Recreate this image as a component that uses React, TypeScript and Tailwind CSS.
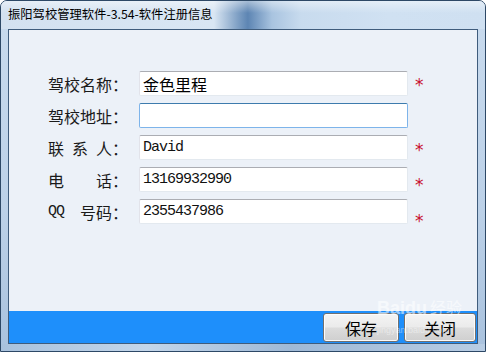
import type { ReactNode } from 'react'

const cjk = { fontFamily: '"Noto Sans CJK SC", "Microsoft YaHei", sans-serif' }
const mono = { fontFamily: '"Liberation Mono", "Noto Sans CJK SC", monospace' }

type Field = {
  label: ReactNode
  value: string
  latin: boolean
  focused?: boolean
  required: boolean
  starOffset: string
}

const fields: Field[] = [
  { label: <span>驾校名称：</span>, value: '金色里程', latin: false, required: true, starOffset: '-translate-y-[2px]' },
  { label: <span>驾校地址：</span>, value: '', latin: false, focused: true, required: false, starOffset: '' },
  {
    label: (
      <>
        <span>联</span>
        <span>系</span>
        <span>人：</span>
      </>
    ),
    value: 'David',
    latin: true,
    required: true,
    starOffset: '-translate-y-[1px]',
  },
  {
    label: (
      <>
        <span>电</span>
        <span>话：</span>
      </>
    ),
    value: '13169932990',
    latin: true,
    required: true,
    starOffset: 'translate-y-[2px]',
  },
  {
    label: (
      <>
        <span style={mono} className="text-[15px] tracking-[-1px]">QQ</span>
        <span>号码：</span>
      </>
    ),
    value: '2355437986',
    latin: true,
    required: true,
    starOffset: 'translate-y-[6px]',
  },
]

function FormRow({ field }: { field: Field }) {
  return (
    <div className="flex h-[25px] items-center">
      <div className="mr-[11px] flex w-[80px] justify-between text-[16px] leading-none text-[#1a1a1a]" style={cjk}>
        {field.label}
      </div>
      <div
        className={
          field.focused
            ? 'flex h-[25px] w-[269px] items-center rounded-[2px] border border-[#7eb4ea] border-t-[#3d7bad] bg-white px-[3px]'
            : 'flex h-[25px] w-[269px] items-center rounded-[2px] border border-[#e3e9ef] border-t-[#abadb3] border-l-[#e2e3ea] bg-white px-[3px]'
        }
      >
        {field.latin ? (
          <span style={mono} className="text-[15px] leading-none tracking-[-1px] text-[#111]">
            {field.value}
          </span>
        ) : (
          <span style={cjk} className="text-[16px] leading-none text-black">
            {field.value}
          </span>
        )}
      </div>
      {field.required ? (
        <span
          className={`ml-[7px] mt-[7px] text-[17px] leading-none text-[#c8102e] ${field.starOffset}`}
          style={{ fontFamily: '"DejaVu Sans", sans-serif' }}
        >
          *
        </span>
      ) : null}
    </div>
  )
}

function AeroButton({ label, width }: { label: string; width: string }) {
  return (
    <button
      type="button"
      className={`flex h-[29px] ${width} items-center justify-center rounded-[3px] border border-[#707070] bg-[linear-gradient(to_bottom,#f4f4f4_0%,#ebebeb_48%,#dcdcdc_52%,#cfcfcf_100%)] text-[16px] text-black shadow-[inset_0_0_0_1px_#fcfcfc]`}
      style={cjk}
    >
      {label}
    </button>
  )
}

export default function App() {
  return (
    <div className="h-[352px] w-[486px] overflow-hidden bg-white">
      <div className="flex h-[352px] w-[486px] flex-col overflow-hidden rounded-t-[7px] border border-[#2d4866] bg-[linear-gradient(to_bottom,#c9dbee_0%,#bcd1e8_60%,#a9c2de_100%)]">
        <div className="relative h-[28px] bg-[linear-gradient(to_right,#d3e1f0_0%,#d9e6f3_44%,#7e9fc4_49%,#5d85b3_51%,#a9c4e0_56%,#c8dbee_62%,#d0e1f2_80%,#cfe0f1_100%)]">
          <div className="absolute inset-x-0 top-0 h-[12px] bg-[linear-gradient(to_bottom,rgba(255,255,255,0.45),rgba(255,255,255,0))]" />
          <div className="relative pl-[7px] pt-[5px] text-[12.3px] leading-[16px] text-black" style={cjk}>
            振阳驾校管理软件-3.54-软件注册信息
          </div>
        </div>
        <div className="flex flex-1 px-[7px]">
          <div className="flex h-[315px] flex-1 flex-col border border-[#3f5c7c] bg-[#ecf1f8]">
            <div className="flex flex-1 flex-col gap-[7px] pl-[39px] pt-[41px]">
              {fields.map((field, i) => (
                <FormRow key={i} field={field} />
              ))}
            </div>
            <div className="relative flex h-[32px] items-start justify-end gap-[5px] bg-[#1e8ffb] pr-[1px] pt-[2px]">
              <AeroButton label="保存" width="w-[76px]" />
              <AeroButton label="关闭" width="w-[72px]" />
              <div className="pointer-events-none absolute left-[368px] top-[-12px] flex flex-col items-start text-white/55">
                <span className="text-[18px] font-bold leading-none" style={{ fontFamily: '"Liberation Sans", sans-serif' }}>
                  Baidu<span style={cjk} className="ml-[3px] text-[16px] font-normal">经验</span>
                </span>
                <span className="mt-[9px] text-[9px] leading-none text-white/45" style={{ fontFamily: '"Liberation Sans", sans-serif' }}>
                  jingyan.baidu.com
                </span>
              </div>
            </div>
          </div>
        </div>
        <div className="h-[7px] bg-[linear-gradient(to_right,#a8c1dc,#c3d6ea_30%,#9fb9d6_60%,#b8cde4)]" />
      </div>
    </div>
  )
}
